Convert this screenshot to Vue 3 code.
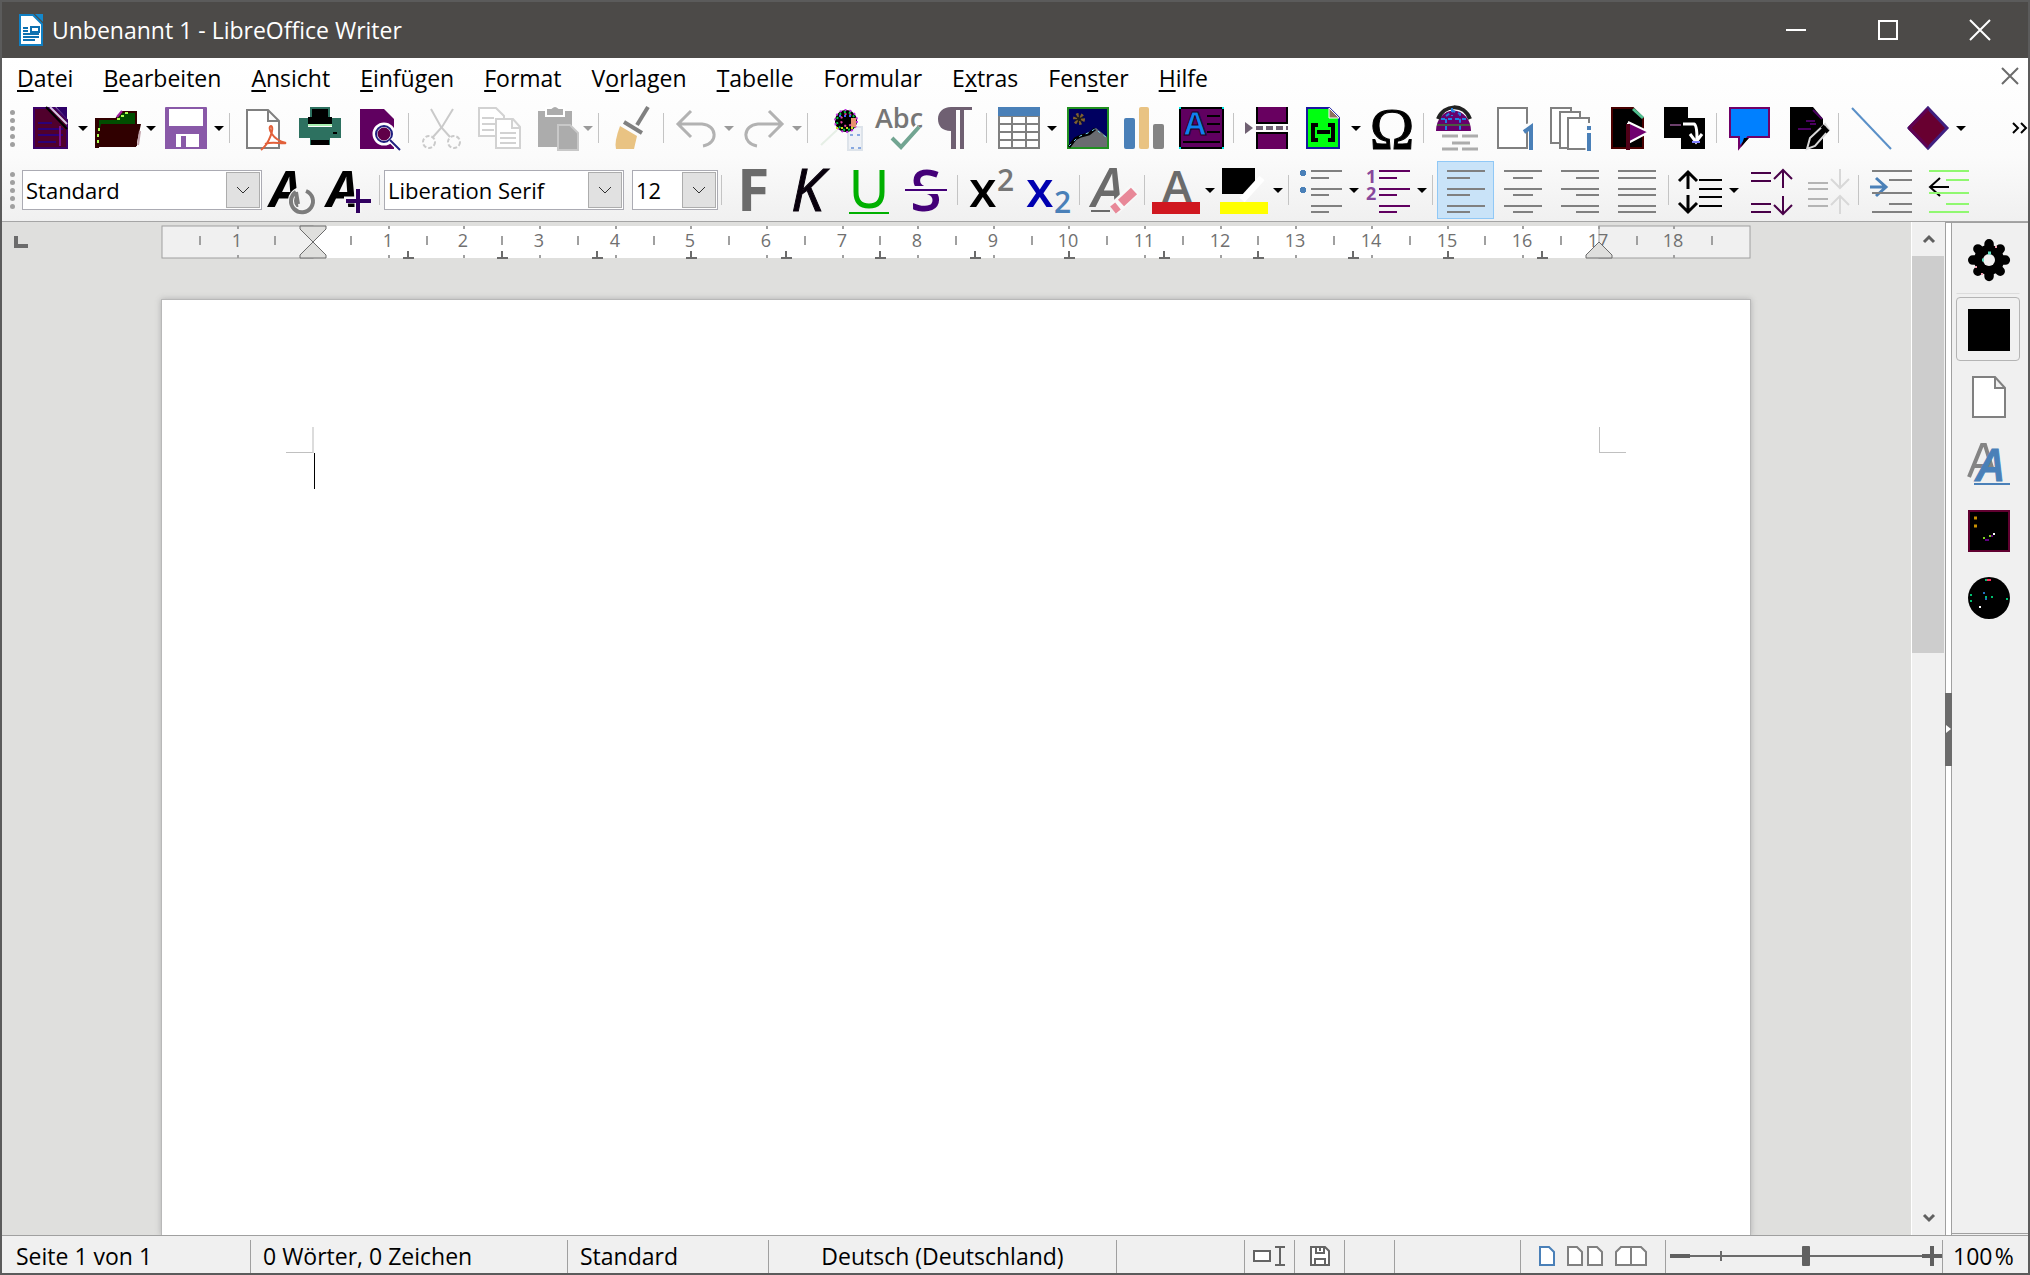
<script setup>
import { ref } from "vue";

//data
let paragraphStyle = ref("Standard");
let fontName = ref("Liberation Serif");
let fontSize = ref("12");
let zoom = ref(50);
let activePanel = ref("properties");

// [before, mnemonic, after]
let menus = [
  ["", "D", "atei"],
  ["", "B", "earbeiten"],
  ["", "A", "nsicht"],
  ["", "E", "infügen"],
  ["", "F", "ormat"],
  ["V", "o", "rlagen"],
  ["", "T", "abelle"],
  ["Formular", "", ""],
  ["E", "x", "tras"],
  ["Fen", "s", "ter"],
  ["", "H", "ilfe"],
];

// all icons are drawn on a 42x42 grid
let sans = 'font-family="Open Sans, sans-serif"';
let lines = (color, list) =>
  list
    .map(([x, y, w]) => `<rect x="${x}" y="${y}" width="${w}" height="2" fill="${color}"/>`)
    .join("");

let icons = {
  new: `<path d="M5 1h21l12 12v28H5z" fill="#50002c" stroke="#3c0068" stroke-width="2"/>
    <path d="M27 0h11v12z" fill="#2e0068"/><path d="M17 0l21 22" stroke="#000" stroke-width="2"/>
    <path d="M21 0l17 17" stroke="#d8c8e8" stroke-width="2"/>
    ${lines("#2b0078", [[9, 15, 14], [9, 21, 25], [9, 27, 25], [9, 34, 18]])}
    <path d="M31 19v20" stroke="#7a1090" stroke-width="2"/>`,
  open: `<path d="M-1 40V12h20l6-7h14v34" fill="#004d00" stroke="#300" stroke-width="2"/>
    <path d="M-2 11h4v30h-4zM4 17H44l-5 23H-2z" fill="#300000"/>
    <path d="M1 36v-3m0-3v-3m1-3v-3M20 12h3m1-3h3m1-3h3" stroke="#a8ff50" stroke-width="2"/>
    <path d="M20 10l5-6" stroke="#a020a0" stroke-width="2"/>
    <path d="M43 24l-2 14" stroke="#c0a0a8" stroke-width="2"/>`,
  save: `<path d="M0 1q0-1 1-1h40q1 0 1 1v41H0z" fill="#8959a8"/>
    <path d="M4 2h34v17H4zM11 27h23v13H11z" fill="#fff"/><path d="M16 29h5v11h-5z" fill="#8959a8"/>`,
  pdf: `<path d="M5 3h21l11 11v27H5zM26 3v11h11" fill="#fff" stroke="#808080" stroke-width="2"/>
    <path d="M19 43C27 37 33 20 29 19c-4 1 1 14 15 17-5 1-14-2-21 1" fill="none" stroke="#e2603a" stroke-width="2"/>`,
  print: `<path d="M11 0h20v14H11zM0 11h9v9h24v-9h9v20H0zM11 31h20v7H11z" fill="#2d7160"/>
    <path d="M13 2h16v8h4v9H9v-9h4z" fill="#000"/>
    <path d="M9 18h24" stroke="#a8f0b0" stroke-width="2"/>
    <path d="M12 33h18v5H12zM34 25h4v2h-4z" fill="#000"/>`,
  preview: `<path d="M4 2h24l10 10v30H4z" fill="#600060"/><circle cx="28" cy="27" r="9" fill="#600048" stroke="#fff" stroke-width="5"/>
    <circle cx="28" cy="27" r="8" fill="none" stroke="#202080" stroke-width="2"/>
    <path d="M34 33l9 9" stroke="#fff" stroke-width="5"/><path d="M34 33l10 10" stroke="#202080" stroke-width="2"/>`,
  cut: `<g fill="none" stroke="#cacaca" stroke-width="2"><path d="M10 2l10 18 9 10M32 2L21 20l-9 10"/>
    <circle cx="8" cy="35" r="6" stroke-dasharray="4 2"/><circle cx="33" cy="35" r="6" stroke-dasharray="4 2"/></g>`,
  copy: `<g fill="#fff" stroke="#d2d2d2" stroke-width="2"><path d="M1 1h17l8 8v20H1zM4 17h14M4 23h12M4 11h12"/>
    <path d="M18 12h17l7 8v21H18zM34 12v9h8M22 26h16M22 31h16M22 36h16"/></g>`,
  paste: `<path d="M4 4h34v36H4z" fill="#acacac"/><path d="M12 1h5q4-4 8 0h5v8H12z" fill="#acacac" stroke="#fff" stroke-width="2"/>
    <path d="M24 18h12l8 8v17H24z" fill="#acacac" stroke="#c8c8c8" stroke-width="2"/>`,
  clone: `<path d="M37 0L26 18" stroke="#808080" stroke-width="4"/><path d="M13 15l18 11" stroke="#808080" stroke-width="4"/>
    <path d="M9 19l17 10-3 13H5q-2-7 4-23z" fill="#e9c383"/>`,
  undo: `<path d="M16 4L3 17l13 13M3 17h24c16 1 16 20 1 22" fill="none" stroke="#b2b2b2" stroke-width="3"/>`,
  redo: `<path d="M26 4l13 13-13 13M39 17H15C-1 18-1 37 14 39" fill="none" stroke="#b2b2b2" stroke-width="3"/>`,
  find: `<path d="M28 20h14v23H28z" fill="#eef1f6" stroke="#dde3ea" stroke-width="2"/><path d="M1 38l16-15" stroke="#e6efe6" stroke-width="2"/>
    <circle cx="26" cy="14" r="11" fill="#000"/>
    <g fill="none" stroke-width="2" stroke-dasharray="2 3"><circle cx="26" cy="14" r="11" stroke="#c030e0"/>
    <circle cx="26" cy="14" r="9" stroke="#00d040"/><circle cx="27" cy="13" r="6" stroke="#e040a0"/>
    <path d="M16 21h19" stroke="#d0e020"/><path d="M19 9h14" stroke="#4060ff"/></g>
    <path d="M31 11h5v9h-5z" fill="#e89070"/><path d="M30 28h3m4 0h3m-9 13h3m4 0h3" stroke="#88a8e0" stroke-width="2"/>`,
  spell: `<text x="-2" y="21" font-size="27" font-weight="600" fill="#767676" ${sans}>Abc</text>
    <path d="M15 31l9 9 18-20" fill="none" stroke="#fdfdfd" stroke-width="8"/>
    <path d="M15 31l9 9 18-20" fill="none" stroke="#72a592" stroke-width="4"/>`,
  marks: `<path d="M38 0v3h-8v39h-4V3h-4v39h-5V24C8 24 4 19 4 12S9 0 17 0z" fill="#6f6072"/>`,
  table: `<path d="M1 9h40v32H1zM1 17h40M1 25h40M1 33h40M14 9v32M28 9v32" fill="#fff" stroke="#808080" stroke-width="2"/>
    <path d="M0 0h42v9H0z" fill="#4a80b8"/>`,
  image: `<path d="M1 1h40v40H1z" fill="#000060" stroke="#209020" stroke-width="2"/>
    <path d="M2 40l12-12 4-1 11-6 11 9v10z" fill="#6a6c70"/><path d="M2 40l6-8 6-3 8-2 6-5" fill="none" stroke="#000" stroke-width="3"/>
    <path d="M2 39l6-6 5-4 8-3 7-4 11 8" fill="none" stroke="#70d0f0" stroke-width="1" stroke-dasharray="3 4"/>
    <circle cx="12" cy="12" r="4" fill="#181820" stroke="#806030" stroke-width="4" stroke-dasharray="2 2"/>`,
  chart: `<rect x="0" y="11" width="11" height="31" rx="2" fill="#4a80b8"/><rect x="15" y="0" width="10" height="42" rx="2" fill="#e9c383"/>
    <rect x="29" y="17" width="11" height="25" rx="2" fill="#848484"/>`,
  textbox: `<path d="M-1 1h43v40H-1z" fill="#600060" stroke="#000" stroke-width="2"/>
    <text x="3" y="28" font-size="32" font-weight="700" fill="#1080f0" stroke="#200020" ${sans}>A</text>
    <path d="M26 9h13M26 17h13M26 25h13M2 35h37" stroke="#000" stroke-width="2"/>
    <path d="M-2 0h2v2h-2zM41 0h2v2h-2zM-2 40h2v2h-2zM41 40h2v2h-2z" fill="#00e8e8"/>`,
  pagebreak: `<path d="M10 0h32v16H10zM10 26h32v16H10z" fill="#680060"/><path d="M10 16h32M10 26h32M11 0v16M11 26v16M41 0v16M41 26v16" stroke="#000" stroke-width="2"/>
    <path d="M-1 15l8 6-8 6z" fill="#6f6072"/><path d="M10 21h32" stroke="#6f6072" stroke-width="4" stroke-dasharray="7 3"/>`,
  field: `<path d="M5 1h22l10 10v30H5z" fill="#00ff10" stroke="#1818a0" stroke-width="2"/>
    <path d="M27 1v10h10z" fill="#907060" stroke="#fff"/>
    <path d="M16 18h-5v15h5M26 18h5v15h-5M15 25h13" fill="none" stroke="#000" stroke-width="4"/>`,
  omega: `<text x="21" y="42" font-size="60" text-anchor="middle" font-family="Liberation Serif, serif" fill="#000" stroke="#000">Ω</text>`,
  link: `<path d="M0 24a17 20 0 1 1 35 0z" fill="#68006c"/><path d="M2 12C8-3 28-4 34 12" fill="none" stroke="#222" stroke-width="4"/>
    <path d="M1 18h33" stroke="#4a5a40" stroke-width="2"/>
    <path d="M10 23V9l7-5 7 3v16M5 12h26M16 1v8" fill="none" stroke="#2080e0" stroke-width="2" stroke-dasharray="4 3"/>
    <path d="M6 29h16M26 29h16M16 36h18M6 42h16M26 42h16" stroke="#acacac" stroke-width="3"/>`,
  footnote: `<path d="M5 1h29v40H5z" fill="#fff" stroke="#808080" stroke-width="2"/>
    <path d="M31 21l8-2v24" fill="none" stroke="#fdfdfd" stroke-width="7"/><path d="M31 25l7-5v23" fill="none" stroke="#4a80b8" stroke-width="4"/>`,
  endnote: `<g fill="#fff" stroke="#808080" stroke-width="2"><path d="M1 1h20v35H1z"/><path d="M10 5h20v36H10z"/><path d="M18 11h21v31H18z"/></g>
    <path d="M39 16v28" stroke="#fdfdfd" stroke-width="7"/><path d="M39 19v4m0 3v18" stroke="#4a80b8" stroke-width="4"/>`,
  bookmark: `<path d="M5 1h21l10 10v30H5z" fill="#000" stroke="#480000" stroke-width="2"/><path d="M26 2l10 9" stroke="#50c090" stroke-width="3"/>
    <path d="M21 16v26M21 15l21 10-21 11" fill="#700070" stroke="#fff" stroke-width="2"/>
    <path d="M21 17v26" stroke="#500018" stroke-width="4"/>`,
  crossref: `<path d="M0 0h24v11h17v31H17V31H0z" fill="#000"/><path d="M6 18h11" stroke="#6c406c" stroke-width="2"/>
    <path d="M19 17h11q3 1 3 15M26 27l6 8 6-8" fill="none" stroke="#fff" stroke-width="3"/><path d="M28 35h8" stroke="#8080ff" stroke-width="2"/>`,
  comment: `<path d="M1 1h39v29H19l-9 11V30H1z" fill="#0080ff" stroke="#700068" stroke-width="2"/><path d="M20 31l-8 9 3-9z" fill="#000"/>`,
  track: `<path d="M4 0h23l10 12v30H4z" fill="#000"/><path d="M27 3l9 9M12 22h13M20 14h9M24 17h6" stroke="#4a0060" stroke-width="2"/>
    <path d="M21 42l3-11 15-14 4 6-14 16z" fill="#000" stroke="#d8d8d8" stroke-width="2"/><path d="M36 19l6 6" stroke="#000" stroke-width="4"/>`,
  line: `<path d="M1 1l39 41" stroke="#5a90c8" stroke-width="2"/>`,
  shape: `<path d="M21 1l19 20-19 20L2 21z" fill="#680030" stroke="#402080" stroke-width="3"/><path d="M2 21L21 2M2 21l19 19" stroke="#600050" stroke-width="3"/>`,

  updateStyle: `<text x="0" y="38" font-size="50" font-weight="700" font-style="italic" fill="#000" ${sans}>A</text>
    <circle cx="32" cy="32" r="11" fill="#f6f6f6" fill-opacity="0.5" stroke="#f6f6f6" stroke-width="6"/>
    <path d="M26 23a11 11 0 1 0 10-1M26 23l2 12" fill="none" stroke="#7c7c7c" stroke-width="4"/>`,
  newStyle: `<text x="0" y="38" font-size="50" font-weight="700" font-style="italic" fill="#000" ${sans}>A</text>
    <path d="M31 17v26M17 31h27" stroke="#f6f6f6" stroke-width="7"/><path d="M31 20v24M19 32h25" stroke="#310060" stroke-width="4"/>`,
  bold: `<text x="3" y="42" font-size="59" font-weight="700" fill="#6b6b6b" ${sans}>F</text>`,
  italic: `<text x="0" y="42" font-size="59" font-weight="500" font-style="italic" fill="#08000c" stroke="#08000c" ${sans}>K</text>`,
  underline: `<path d="M8 1v22q0 14 13 14t13-14V1" fill="none" stroke="#00b000" stroke-width="5"/><path d="M1 44h40" stroke="#00b000" stroke-width="2"/>`,
  strike: `<text x="21" y="42" font-size="57" font-weight="600" text-anchor="middle" fill="#440078" ${sans}>S</text>
    <path d="M0 21h42" stroke="#f8f8f8" stroke-width="8"/><path d="M0 21h42" stroke="#440078" stroke-width="2"/>`,
  superscript: `<text x="-1" y="38" font-size="50" font-weight="600" fill="#000" ${sans}>x</text>
    <text x="27" y="22" font-size="30" font-weight="600" fill="#767676" ${sans}>2</text>`,
  subscript: `<text x="-1" y="38" font-size="50" font-weight="600" fill="#0000b0" ${sans}>x</text>
    <text x="27" y="44" font-size="30" font-weight="600" fill="#4a80b8" ${sans}>2</text>`,
  clear: `<text x="0" y="38" font-size="54" font-weight="600" font-style="italic" fill="#6b6b6b" ${sans}>A</text>
    <path d="M-1 42h19" stroke="#6b6b6b" stroke-width="2"/><path d="M22 40l21-20" stroke="#f8f8f8" stroke-width="13"/>
    <path d="M21 41l5-4m3-3l13-12" stroke="#e88898" stroke-width="9"/>`,
  fontColor: `<text x="21" y="34" font-size="46" font-weight="600" text-anchor="middle" fill="#6b6b6b" ${sans}>A</text>
    <path d="M-4 33h48v12H-4z" fill="#d01820"/>`,
  highlight: `<path d="M-2-1h33v15L20 25H-2z" fill="#000"/><path d="M18 31L38 9" stroke="#fff" stroke-width="7"/><path d="M-4 33h48v12H-4z" fill="#ff0"/>`,
  bullets: `<path d="M3 1v6m-3-3h6M3 18v6m-3-3h6" stroke="#4a80b8" stroke-width="4"/>
    ${lines("#808080", [[11, 1, 31], [11, 8, 18], [11, 19, 31], [11, 25, 18], [11, 36, 31], [11, 42, 18]])}`,
  numbers: `<text font-size="18" font-weight="700" fill="#88489c" ${sans}><tspan x="-2" y="14">1</tspan><tspan x="-2" y="31">2</tspan></text>
    ${lines("#600060", [[11, 1, 31], [11, 8, 18], [11, 19, 31], [11, 25, 18], [11, 36, 31], [11, 42, 18]])}`,
  left: lines("#808080", [[2, 1, 38], [2, 8, 23], [2, 19, 38], [2, 25, 23], [2, 36, 38], [2, 42, 23]]),
  center: lines("#808080", [[2, 1, 38], [11, 8, 20], [2, 19, 38], [11, 25, 20], [2, 36, 38], [11, 42, 20]]),
  right: lines("#808080", [[2, 1, 38], [17, 8, 23], [2, 19, 38], [17, 25, 23], [2, 36, 38], [17, 42, 23]]),
  justify: lines("#808080", [[2, 1, 38], [2, 8, 38], [2, 19, 38], [2, 25, 38], [2, 36, 38], [2, 42, 38]]),
  spacing: `<path d="M-1 12l9-9 9 9M8 3v17M-1 34l9 9 9-9M8 43V26" fill="none" stroke="#000" stroke-width="3"/>
    ${lines("#000", [[19, 10, 23], [19, 19, 23], [19, 27, 23], [19, 36, 23]])}`,
  increase: `<path d="M25 10l9-9 9 9M34 1v18M25 36l9 9 9-9M34 45V27" fill="none" stroke="#480048" stroke-width="2"/>
    ${lines("#480048", [[2, 3, 20], [2, 11, 20], [2, 34, 20], [2, 42, 20]])}`,
  decrease: `<path d="M25 10l9 9 9-9M34 19V0M25 36l9-9 9 9M34 27v18" fill="none" stroke="#d8d8d8" stroke-width="2"/>
    ${lines("#b4b4b4", [[2, 13, 20], [2, 19, 20], [2, 29, 20], [2, 36, 20]])}`,
  indent: `<path d="M-1 18h15M5 9l10 9-10 9" fill="none" stroke="#4a80b8" stroke-width="3"/>
    ${lines("#808080", [[1, 1, 40], [18, 10, 23], [1, 23, 40], [18, 34, 23], [1, 42, 40]])}`,
  outdent: `<path d="M21 18H2M12 9L2 18l10 9" fill="none" stroke="#000" stroke-width="2"/>
    ${lines("#90f870", [[1, 1, 40], [18, 10, 23], [1, 23, 40], [18, 34, 23], [1, 42, 40]])}`,

  gear: `<circle cx="21" cy="21" r="15"/><path d="M21 2v38M2 21h38M8 8l26 26M34 8L8 34" stroke="#000" stroke-width="11" stroke-linecap="round" transform="translate(3 3) scale(0.86)"/>
    <circle cx="21" cy="21" r="6" fill="#f0f0f0"/><path d="M20 14h3M14 21h2" stroke="#60e0c0" stroke-width="3"/>
    <path d="M27 8h2M7 28h2M13 35h2" stroke="#f0a0b0" stroke-width="2"/>`,
  properties: `<path d="M0 0h42v42H0z" fill="#000"/>`,
  page: `<path d="M5 1h22l10 11v29H5zM27 1v11h10" fill="#fff" stroke="#808080" stroke-width="2"/>`,
  styles: `<path d="M1 34L14 2h3l8 26M6 23h16" fill="none" stroke="#848484" stroke-width="4"/>
    <text x="9" y="38" font-size="46" font-weight="600" font-style="italic" fill="#4a80b8" stroke="#4a80b8" ${sans}>A</text>
    <path d="M6 41h36" stroke="#4a80b8" stroke-width="2"/>`,
  gallery: `<path d="M1 1h40v40H1z" fill="#000" stroke="#600030" stroke-width="2"/><path d="M6 8h3M6 16h3" stroke="#c89000" stroke-width="3"/>
    <path d="M15 28h2M21 26h2" stroke="#80d020" stroke-width="2"/><path d="M17 30h4M23 26h2" stroke="#600080" stroke-width="2"/><path d="M25 24h2" stroke="#fff" stroke-width="2"/>`,
  navigator: `<circle cx="21" cy="21" r="21" fill="#000"/><path d="M17 3h2M2 18h2M2 24h2M38 22h2M17 20h2M23 20h2" stroke="#00c070" stroke-width="2"/>
    <path d="M19 3h4" stroke="#ff3060" stroke-width="2"/><path d="M15 16h2M17 22h2" stroke="#2070c0" stroke-width="2"/><path d="M11 30h2" stroke="#fff" stroke-width="2"/>`,
};

let item = (id, label, menu = false, off = false) => ({ id, label, menu, off });

let standardBar = [
  [item("new", "Neu", true), item("open", "Öffnen", true), item("save", "Speichern", true)],
  [item("pdf", "Als PDF exportieren"), item("print", "Drucken"), item("preview", "Druckvorschau")],
  [
    item("cut", "Ausschneiden", false, true),
    item("copy", "Kopieren", false, true),
    item("paste", "Einfügen", true, true),
  ],
  [item("clone", "Formatierung übertragen")],
  [item("undo", "Rückgängig", true, true), item("redo", "Wiederherstellen", true, true)],
  [item("find", "Suchen und Ersetzen"), item("spell", "Rechtschreibung"), item("marks", "Formatierungszeichen")],
  [
    item("table", "Tabelle einfügen", true),
    item("image", "Bild einfügen"),
    item("chart", "Diagramm einfügen"),
    item("textbox", "Textfeld einfügen"),
  ],
  [item("pagebreak", "Seitenumbruch"), item("field", "Feldbefehl", true), item("omega", "Sonderzeichen")],
  [
    item("link", "Hyperlink"),
    item("footnote", "Fußnote"),
    item("endnote", "Endnote"),
    item("bookmark", "Lesezeichen"),
    item("crossref", "Querverweis"),
  ],
  [item("comment", "Kommentar"), item("track", "Änderungen")],
  [item("line", "Linie"), item("shape", "Formen", true)],
];

let styleButtons = [item("updateStyle", "Vorlage aktualisieren"), item("newStyle", "Neue Vorlage")];

let formatBar = [
  [item("bold", "Fett"), item("italic", "Kursiv"), item("underline", "Unterstrichen"), item("strike", "Durchgestrichen")],
  [item("superscript", "Hochgestellt"), item("subscript", "Tiefgestellt")],
  [item("clear", "Formatierung löschen")],
  [item("fontColor", "Schriftfarbe", true), item("highlight", "Zeichenhervorhebung", true)],
  [item("bullets", "Aufzählung", true), item("numbers", "Nummerierung", true)],
  [item("left", "Linksbündig"), item("center", "Zentriert"), item("right", "Rechtsbündig"), item("justify", "Blocksatz")],
  [
    item("spacing", "Zeilenabstand", true),
    item("increase", "Abstand erhöhen"),
    item("decrease", "Abstand verringern", false, true),
  ],
  [item("indent", "Einzug erhöhen"), item("outdent", "Einzug verringern")],
];

let align = ref("left");

let panels = [
  item("properties", "Eigenschaften"),
  item("page", "Seite"),
  item("styles", "Formatvorlagen"),
  item("gallery", "Galerie"),
  item("navigator", "Navigator"),
];

// ruler: 21 cm wide, zero at the 2 cm margin
let rulerWidth = 1588;
let cm = rulerWidth / 21;
let rulerX = (n) => Math.round((n + 2) * cm);
let numbers = [-1, 1, 2, 3, 4, 5, 6, 7, 8, 9, 10, 11, 12, 13, 14, 15, 16, 17, 18];
let halves = Array.from({ length: 21 }, (_, i) => i - 1.5);
let tabStops = Array.from({ length: 13 }, (_, i) => (i + 1) * 1.25);

//methods
let press = (id) => {
  if (["left", "center", "right", "justify"].includes(id)) align.value = id;
};
</script>

<template>
  <div class="window">
    <header class="title-bar">
      <svg class="app-icon" viewBox="0 0 24 32">
        <path d="M1 1h13l9 9v21H1z" fill="#fff" stroke="#1080c4" stroke-width="2" />
        <path d="M16 0h8v8z" fill="#1488cc" />
        <path d="M4 14h5M4 17h5M4 20h16M4 23h16M4 26h12" stroke="#0d70b0" stroke-width="2" />
        <path d="M12 13h8v5h-8z" fill="#fff" stroke="#0d70b0" stroke-width="2" />
      </svg>
      <h1 class="title">Unbenannt 1 - LibreOffice Writer</h1>
      <button class="window-button" aria-label="Minimieren">
        <svg viewBox="0 0 20 20"><path d="M0 10h20" /></svg>
      </button>
      <button class="window-button" aria-label="Maximieren">
        <svg viewBox="0 0 20 20"><path d="M1 1h18v18H1z" /></svg>
      </button>
      <button class="window-button" aria-label="Schließen">
        <svg viewBox="0 0 20 20"><path d="M0 0l20 20M20 0L0 20" /></svg>
      </button>
    </header>

    <div class="bars">
      <nav class="menu-bar">
        <button v-for="(m, i) in menus" :key="i" class="menu">{{ m[0] }}<span class="key">{{ m[1] }}</span>{{ m[2] }}</button>
        <button class="close-doc" aria-label="Dokument schließen">
          <svg viewBox="0 0 16 16"><path d="M0 0l16 16M16 0L0 16" /></svg>
        </button>
      </nav>

      <div class="toolbar">
        <span class="grip"><i v-for="n in 5" :key="n"></i></span>
        <div v-for="(group, g) in standardBar" :key="g" class="group">
          <button v-for="b in group" :key="b.id" class="tool" :class="{ 'tool--menu': b.menu, 'tool--off': b.off }" :aria-label="b.label">
            <svg class="icon" viewBox="0 0 42 42" v-html="icons[b.id]"></svg>
            <i v-if="b.menu" class="arrow"></i>
          </button>
        </div>
        <button class="more" aria-label="Mehr">
          <svg viewBox="0 0 16 12"><path d="M1 1l5 5-5 5M9 1l5 5-5 5" /></svg>
        </button>
      </div>

      <div class="toolbar">
        <span class="grip"><i v-for="n in 5" :key="n"></i></span>
        <label class="combo">
          <select v-model="paragraphStyle" aria-label="Absatzvorlage"><option>Standard</option></select>
          <span class="combo-arrow"><svg viewBox="0 0 14 8"><path d="M1 1l6 6 6-6" /></svg></span>
        </label>
        <div class="group">
          <button v-for="b in styleButtons" :key="b.id" class="tool" :aria-label="b.label">
            <svg class="icon" viewBox="0 0 42 42" v-html="icons[b.id]"></svg>
          </button>
        </div>
        <div class="group group--fonts">
          <label class="combo">
            <select v-model="fontName" aria-label="Schriftname"><option>Liberation Serif</option></select>
            <span class="combo-arrow"><svg viewBox="0 0 14 8"><path d="M1 1l6 6 6-6" /></svg></span>
          </label>
          <label class="combo combo--small">
            <select v-model="fontSize" aria-label="Schriftgröße"><option>12</option></select>
            <span class="combo-arrow"><svg viewBox="0 0 14 8"><path d="M1 1l6 6 6-6" /></svg></span>
          </label>
        </div>
        <div v-for="(group, g) in formatBar" :key="g" class="group">
          <button
            v-for="b in group"
            :key="b.id"
            class="tool"
            :class="{ 'tool--menu': b.menu, 'tool--off': b.off, 'tool--active': b.id === align }"
            :aria-label="b.label"
            @click="press(b.id)"
          >
            <svg class="icon" viewBox="0 0 42 42" v-html="icons[b.id]"></svg>
            <i v-if="b.menu" class="arrow"></i>
          </button>
        </div>
      </div>
    </div>

    <div class="workspace">
      <main class="document">
        <button class="tab-type" aria-label="Tabulator"></button>
        <svg class="ruler" :viewBox="`0 0 ${rulerWidth} 34`">
          <rect x="0" y="1" :width="rulerWidth" height="32" fill="#fff" />
          <rect x="0" y="1" :width="rulerX(0)" height="32" class="ruler-margin" />
          <rect :x="rulerX(17)" y="1" :width="rulerWidth - rulerX(17)" height="32" class="ruler-margin" />
          <g class="ticks">
            <path v-for="h in halves" :key="h" :d="`M${rulerX(h)} 11v9`" />
            <path v-for="n in numbers" :key="n" :d="`M${rulerX(n)} 1v3M${rulerX(n)} 30v3`" />
          </g>
          <text v-for="n in numbers" :key="n" :x="rulerX(n) - 1" y="22" class="ruler-number">{{ Math.abs(n) }}</text>
          <path v-for="t in tabStops" :key="t" class="tab-stop" :d="`M${rulerX(t)} 26v7m-5 0h11`" />
          <g class="handle" :transform="`translate(${rulerX(0)} 0)`">
            <path d="M-13 1h26v3L0 17l-13-13zM0 17l13 13v3h-26v-3z" />
          </g>
          <g class="handle" :transform="`translate(${rulerX(17)} 0)`">
            <path d="M0 17l13 13v3h-26v-3z" />
          </g>
        </svg>
        <span></span>
        <div class="page">
          <div class="corners">
            <span class="corner corner--left"></span>
            <span class="corner corner--right"></span>
          </div>
          <div class="caret"></div>
        </div>
      </main>

      <div class="scrollbar">
        <button class="scroll-button" aria-label="Nach oben">
          <svg viewBox="0 0 12 8"><path d="M1 7l5-5 5 5" /></svg>
        </button>
        <div class="scroll-track"><div class="scroll-thumb"></div></div>
        <button class="scroll-button" aria-label="Nach unten">
          <svg viewBox="0 0 12 8"><path d="M1 1l5 5 5-5" /></svg>
        </button>
      </div>

      <div class="splitter">
        <button class="splitter-handle" aria-label="Seitenleiste ausblenden"></button>
      </div>

      <aside class="sidebar">
        <button class="panel panel--settings" aria-label="Einstellungen">
          <svg class="icon" viewBox="0 0 42 42" v-html="icons.gear"></svg>
        </button>
        <button
          v-for="p in panels"
          :key="p.id"
          class="panel"
          :class="{ 'panel--active': activePanel === p.id }"
          :aria-label="p.label"
          @click="activePanel = p.id"
        >
          <svg class="icon" viewBox="0 0 42 42" v-html="icons[p.id]"></svg>
        </button>
      </aside>
    </div>

    <footer class="status-bar">
      <span class="cell cell--first">Seite 1 von 1</span>
      <span class="cell">0 Wörter, 0 Zeichen</span>
      <span class="cell">Standard</span>
      <span class="cell cell--center">Deutsch (Deutschland)</span>
      <span class="cell"></span>
      <span class="cell cell--center">
        <svg class="insert-icon" viewBox="0 0 33 20">
          <path d="M1 5h16v10H1z" fill="#fff" /><path d="M22 1h10M22 19h10M27 1v18" />
        </svg>
      </span>
      <span class="cell cell--center">
        <svg class="disk-icon" viewBox="0 0 20 20">
          <path d="M1 1h14l4 4v14H1z" fill="#fff" /><path d="M6 1v6h8V1M10 1v4M5 19v-6h10v6" />
        </svg>
      </span>
      <span class="cell"></span>
      <span class="cell"></span>
      <span class="cell cell--center cell--views">
        <button class="view view--active" aria-label="Einzelseite">
          <svg viewBox="0 0 16 20"><path d="M1 1h9l5 5v13H1z" /></svg>
        </button>
        <button class="view" aria-label="Mehrere Seiten">
          <svg class="wide" viewBox="0 0 36 20"><path d="M1 1h9l5 5v13H1zM21 1h9l5 5v13H21z" /></svg>
        </button>
        <button class="view" aria-label="Buchansicht">
          <svg class="book" viewBox="0 0 32 20"><path d="M16 1H6L1 6v13h15zM16 1h10l5 5v13H16z" /></svg>
        </button>
      </span>
      <span class="cell cell--zoom">
        <button class="zoom-button" aria-label="Verkleinern">
          <svg viewBox="0 0 20 20"><path d="M0 10h20" /></svg>
        </button>
        <input v-model="zoom" type="range" min="0" max="100" class="zoom" aria-label="Maßstab" />
        <button class="zoom-button" aria-label="Vergrößern">
          <svg viewBox="0 0 20 20"><path d="M0 10h20M10 0v20" /></svg>
        </button>
      </span>
      <span class="cell cell--percent">100&#8202;%</span>
    </footer>
  </div>
</template>

<style>
body {
  margin: 0;
}
</style>

<style scoped>
.window {
  box-sizing: border-box;
  height: 100vh;
  display: flex;
  flex-direction: column;
  border: 2px solid #5b5b5b;
  background-color: #f0f0f0;
  font-family: "Open Sans", "Noto Sans", sans-serif;
  font-size: 23px;
  color: #000;
  overflow: hidden;
}

button {
  border: 0;
  padding: 0;
  margin: 0;
  background: none;
  font: inherit;
  color: inherit;
}

svg {
  display: block;
  flex: none;
  overflow: visible;
}

/* title bar */
.title-bar {
  display: flex;
  align-items: center;
  height: 56px;
  flex: none;
  background-color: #4c4a48;
  color: #fff;
  padding: 0 2px 0 17px;
}

.app-icon {
  width: 24px;
  height: 32px;
}

.title {
  flex: 1;
  margin: 0 0 0 9px;
  font-size: 23px;
  font-weight: 400;
}

.window-button {
  width: 92px;
  height: 56px;
  display: flex;
  align-items: center;
  justify-content: center;
}

.window-button svg {
  width: 20px;
  height: 20px;
  fill: none;
  stroke: #fff;
  stroke-width: 2;
}

/* menu and toolbars */
.bars {
  flex: none;
  background: linear-gradient(#fff, #fbfbfb 60%, #f0f0f0);
  border-bottom: 1px solid #a5a5a5;
  padding-bottom: 2px;
}

.menu-bar {
  display: flex;
  align-items: center;
  height: 41px;
}

.menu {
  padding: 0 15px 2px;
  white-space: nowrap;
}

.key {
  text-decoration: underline;
  text-decoration-thickness: 2px;
  text-underline-offset: 3px;
}

.close-doc {
  margin: 0 10px 6px auto;
}

.close-doc svg {
  width: 16px;
  height: 16px;
  stroke: #6b6b6b;
  stroke-width: 2;
}

.toolbar {
  display: flex;
  align-items: center;
  height: 58px;
}

.toolbar + .toolbar {
  margin-top: 4px;
}

.grip {
  width: 20px;
  flex: none;
  display: flex;
  flex-direction: column;
  align-items: center;
  gap: 3px;
}

.grip i {
  width: 5px;
  height: 5px;
  border-radius: 50%;
  background-color: #a0a0a0;
}

.group {
  display: flex;
  align-items: center;
}

.group + .group::before {
  content: "";
  width: 1px;
  height: 30px;
  margin: 0 4px 0 3px;
  background-color: #c4c4c4;
}

.tool {
  box-sizing: border-box;
  width: 57px;
  height: 58px;
  padding-left: 8px;
  display: flex;
  align-items: center;
}

.tool--menu {
  width: 68px;
  padding-left: 7px;
}

.tool--active {
  background-color: #c9e3f8;
  box-shadow: inset 0 0 0 1px #90c8f6;
}

.icon {
  width: 42px;
  height: 42px;
}

.arrow {
  margin-left: 7px;
  border: 5px solid transparent;
  border-top-color: #000;
  border-bottom: 0;
}

.tool--off .arrow {
  border-top-color: #9a9a9a;
}

.more {
  margin-left: auto;
}

.more svg {
  width: 16px;
  height: 12px;
  fill: none;
  stroke: #000;
  stroke-width: 2;
}

.combo {
  box-sizing: border-box;
  width: 240px;
  height: 40px;
  padding: 1px;
  display: flex;
  border: 1px solid #ababb3;
  background-color: #fff;
  font-size: 22px;
}

.combo--small {
  width: 86px;
  margin-left: 8px;
}

.combo select {
  flex: 1;
  min-width: 0;
  appearance: none;
  border: 0;
  outline: 0;
  padding: 0 2px;
  background-color: #fff;
  font: inherit;
  color: #000;
}

.combo-arrow {
  box-sizing: border-box;
  width: 34px;
  display: flex;
  align-items: center;
  justify-content: center;
  border: 1px solid #adadad;
  background-color: #e1e1e1;
}

.combo-arrow svg {
  width: 14px;
  height: 8px;
  fill: none;
  stroke: #303030;
}

/* document area */
.workspace {
  flex: 1;
  min-height: 0;
  display: flex;
}

.document {
  flex: 1;
  min-width: 0;
  display: grid;
  grid-template-columns: 1fr minmax(0, 1588px) 1fr;
  grid-template-rows: 78px 1fr;
  padding-right: 2px;
  background-color: #dfdfdd;
  overflow: hidden;
}

.tab-type {
  width: 14px;
  height: 12px;
  box-sizing: border-box;
  margin: 14px 0 0 12px;
  border-left: 4px solid #6b6b6b;
  border-bottom: 4px solid #6b6b6b;
}

.ruler {
  grid-column: 2;
  width: 100%;
  margin-top: 3px;
}

.ruler-margin {
  fill: #f0f0f0;
  stroke: #a0a0a0;
}

.ticks {
  stroke: #a0a0a0;
  stroke-width: 2;
}

.ruler-number {
  font-size: 18px;
  text-anchor: middle;
  fill: #707070;
}

.tab-stop {
  fill: none;
  stroke: #6b6b6b;
  stroke-width: 2;
}

.handle {
  fill: #dfdfdd;
  stroke: #6b6b6b;
}

.page {
  grid-column: 2;
  background-color: #fff;
  box-shadow: 0 0 0 1px #b8b8b8, 0 0 6px 1px #b0b0b0;
}

.corners {
  display: flex;
  justify-content: space-between;
  padding: 127px 124px 0;
}

.corner {
  width: 26px;
  height: 25px;
  border-bottom: 1px solid #c0c0c0;
}

.corner--left {
  border-right: 2px solid #dcdcdc;
}

.corner--right {
  border-left: 1px solid #c0c0c0;
}

.caret {
  width: 1px;
  height: 36px;
  margin-left: 152px;
  background-color: #000;
}

.scrollbar {
  width: 33px;
  flex: none;
  display: flex;
  flex-direction: column;
  border-left: 1px solid #fff;
}

.scroll-button {
  height: 34px;
  display: flex;
  align-items: center;
  justify-content: center;
}

.scroll-button svg {
  width: 12px;
  height: 8px;
  fill: none;
  stroke: #606060;
  stroke-width: 3;
}

.scroll-track {
  flex: 1;
}

.scroll-thumb {
  height: 42%;
  margin-right: 1px;
  background-color: #cdcdcd;
}

.splitter {
  box-sizing: border-box;
  width: 7px;
  flex: none;
  border: 1px solid #a0a0a0;
  border-bottom: 0;
  background-color: #fff;
  display: flex;
  align-items: center;
}

.splitter-handle {
  flex: none;
  width: 7px;
  height: 73px;
  margin: 0 -1px;
  display: flex;
  align-items: center;
  background-color: #6b6b6b;
}

.splitter-handle::before {
  content: "";
  margin-left: 1px;
  border: 4px solid transparent;
  border-left: 5px solid #fff;
  border-right: 0;
}

.sidebar {
  width: 76px;
  flex: none;
  display: flex;
  flex-direction: column;
  align-items: center;
  gap: 3px;
  box-sizing: border-box;
  margin-bottom: 1px;
  padding-right: 4px;
  border-top: 1px solid #a0a0a0;
  border-bottom: 1px solid #a0a0a0;
}

.panel {
  box-sizing: border-box;
  width: 64px;
  height: 64px;
  padding: 2px 0 0 2px;
  display: flex;
  align-items: center;
  justify-content: center;
  border: 1px solid transparent;
  border-radius: 4px;
}

.panel--settings {
  height: 71px;
  border-radius: 0;
  border-bottom-color: #dcdcdc;
}

.panel--active {
  border-color: #b4b4b4;
}

/* status bar */
.status-bar {
  flex: none;
  height: 37px;
  display: grid;
  grid-template-columns: 248fr 317fr 201fr 348fr 128fr 50fr 50fr 50fr 126fr 145fr 277fr 86fr;
  border-top: 1px solid #a0a0a0;
}

.cell {
  display: flex;
  align-items: center;
  min-width: 0;
  margin: 4px 0 2px;
  padding-left: 12px;
  padding-bottom: 1px;
  white-space: nowrap;
}

.cell + .cell {
  border-left: 1px solid #a0a0a0;
}

.cell--first {
  padding-left: 14px;
}

.cell--center {
  justify-content: center;
  padding-left: 0;
}

.cell--views {
  gap: 12px;
}

.cell--zoom {
  padding-left: 4px;
}

.cell--percent {
  padding-left: 10px;
}

.cell svg {
  width: 16px;
  height: 20px;
  fill: none;
  stroke: #646464;
  stroke-width: 2;
}

.cell .insert-icon {
  width: 33px;
}

.cell .disk-icon {
  width: 20px;
}

.view svg {
  fill: #fff;
  stroke: #808080;
}

.view--active svg {
  stroke: #4a80b8;
}

.view .wide {
  width: 36px;
}

.view .book {
  width: 32px;
}

.cell .zoom-button svg {
  width: 20px;
  stroke: #606060;
  stroke-width: 4;
}

.zoom {
  appearance: none;
  flex: 1;
  min-width: 0;
  height: 20px;
  margin: 0;
  background:
    linear-gradient(#6b6b6b, #6b6b6b) 13% 50% / 2px 10px no-repeat,
    linear-gradient(#6b6b6b, #6b6b6b) 0 50% / 100% 2px no-repeat;
}

.zoom::-webkit-slider-thumb {
  appearance: none;
  width: 8px;
  height: 20px;
  border-radius: 1px;
  background-color: #606060;
}
</style>
